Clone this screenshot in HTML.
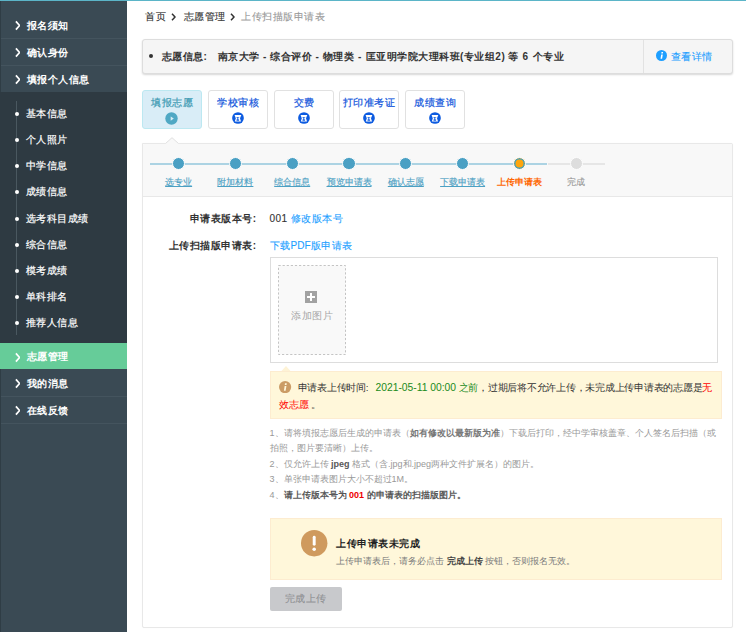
<!DOCTYPE html>
<html lang="zh">
<head>
<meta charset="utf-8">
<title>上传扫描版申请表</title>
<style>
*{box-sizing:border-box;margin:0;padding:0}
html,body{width:746px;height:632px;overflow:hidden;background:#fff}
body{font-family:"Liberation Sans",sans-serif;font-size:10px;letter-spacing:0.5px;color:#333;position:relative}
.l0{letter-spacing:0}
.tab .t{-webkit-text-stroke:0.22px}
.si span{-webkit-text-stroke:0.2px}
#crumb,.val,#info .more,.sl,#btn{-webkit-text-stroke:0.12px}
.sl.o{-webkit-text-stroke:0}
a{text-decoration:none}
.abs{position:absolute}
#topline{left:0;top:0;width:746px;height:1px;background:#5bb5c8;z-index:5}
/* sidebar */
#side{left:0;top:0;width:127px;height:632px;background:#3a4a54}
.nav{left:0;width:127px;height:27px;line-height:27px;color:#fff;font-weight:bold;font-size:10px;box-shadow:inset 0 1px 0 #44545e}
.nav .chev{position:absolute;left:14.5px;top:8.5px;width:5.5px;height:11px}
.nav span{position:absolute;left:26.5px;top:1px;white-space:nowrap}
.nav.first{box-shadow:none}
.nav.act{background:#66cc99;box-shadow:none}
#sub{left:0;top:92px;width:127px;height:251px;background:#2e3a42}
#sub .vline{position:absolute;left:16px;top:9px;width:1px;height:234px;background:#4a5860}
.si{position:absolute;left:0;margin-top:0.8px;width:127px;height:26px;line-height:26px;color:#fff;font-size:10px}
.si i{position:absolute;left:14.5px;top:11px;width:4px;height:4px;border-radius:50%;background:#fff}
.si span{position:absolute;left:25.5px;top:0;white-space:nowrap}
/* breadcrumb */
#crumb{left:145px;top:9px;height:16px;line-height:16px;font-size:10px;color:#333;white-space:nowrap}
#crumb .sep{display:inline-block;width:5px;height:8px;margin:0 7.5px 0 5px;vertical-align:-1px}
#crumb .last{color:#999}
/* info bar */
#info{left:142px;top:39px;width:591px;height:35px;background:#f5f5f5;border:1px solid #ddd;border-radius:3px;box-shadow:0 1px 2px rgba(0,0,0,.16)}
#info .dot{position:absolute;left:6.2px;top:14px;width:4px;height:4px;border-radius:50%;background:#333}
#info .txt{position:absolute;left:0;top:0;line-height:33px;font-weight:bold;color:#333;white-space:nowrap}
#info .txt span{position:absolute;top:0}
#info .vsep{position:absolute;left:500px;top:0;width:1px;height:33px;background:#e2e2e2}
#info .ico{position:absolute;left:512.7px;top:9.8px;width:11px;height:11px}
#info .more{position:absolute;left:527.5px;top:-0.5px;line-height:33px;color:#1e9fff;white-space:nowrap}
/* tabs */
.tab{top:90px;width:60px;height:39px;border:1px solid #e1e1e1;border-radius:3px;background:#fff;text-align:center;color:#1558dc;font-size:10px}
.tab .t{position:absolute;left:-10px;width:78px;top:4px;line-height:16px;white-space:nowrap;text-align:center}
.tab svg.hg{position:absolute;left:22.5px;top:21.2px;width:12px;height:12px}
.tab svg.pl{position:absolute;left:22.1px;top:20.6px;width:13px;height:13px}
.tab.on{background:#d9edf7;border-color:#bce8f1;color:#3f9bb4}
/* panel */
#panel{left:142px;top:143px;width:591px;height:485px;border:1px solid #e8e8e8;border-radius:0 2px 2px 2px;background:#fff;box-shadow:0 0 1px rgba(0,0,0,.05)}
#steps{position:absolute;left:0;top:0;width:589px;height:53px;background:#f8f8f8;border-bottom:1px solid #e8e8e8;border-radius:1px 1px 0 0}
#arrow{left:165px;top:137px;width:14px;height:7px}
.ln{position:absolute;top:19px;height:2px;background:#acd3e3}
.ln.g{background:#e6e6e6}
.c{position:absolute;top:13.3px;width:13.2px;height:13.2px;border-radius:50%;background:#4aa0c4;border:1.6px solid #fdfdfd}
.c.o{background:#ffa60d;box-shadow:inset 0 0 0 1.5px #4aa0b8}
.c.g{background:#ddd}
.sl{position:absolute;top:31.3px;width:80px;text-align:center;font-size:9px;letter-spacing:0;line-height:14px;color:#4ba0c3;white-space:nowrap}
.sl u{text-decoration:underline}
.sl.o{color:#ff6600;font-weight:bold}
.sl.g{color:#999}
/* form */
.lab{font-weight:bold;color:#333;text-align:right;width:120px;left:136.7px;line-height:16px;white-space:nowrap}
.val{left:269.5px;line-height:16px;white-space:nowrap;color:#333}
.val a,.lnk{color:#1e9fff}
#upbox{left:270px;top:257px;width:448px;height:106px;border:1px solid #ddd;background:#fff}
#add{position:absolute;left:7px;top:7px;width:68px;height:90px;text-align:center;color:#a6a6a6;font-size:9.75px}
#add svg.bx{position:absolute;left:0;top:0;width:68px;height:90px}
#add .plus{position:absolute;left:27.3px;top:25.8px;width:12px;height:12px;background:#a2a2a2}
#add .plus:before{content:"";position:absolute;left:2px;top:5.2px;width:8px;height:1.6px;background:#fff}
#add .plus:after{content:"";position:absolute;left:5.2px;top:2px;width:1.6px;height:8px;background:#fff}
#add .tx{position:absolute;left:1px;width:66px;top:44px;line-height:14px}
#alert1{left:270px;top:370.5px;width:451.7px;height:48px;background:#fff7da;border:1px solid #fdecd0}
#alert1 .arr{position:absolute;left:9.7px;top:-6px;width:10px;height:5.5px}
#alert1 .ico{position:absolute;left:8.4px;top:9.2px;width:12.2px;height:12.2px}
#alert1 .p{position:absolute;left:8px;top:7px;width:436px;line-height:17px;font-size:9.75px;letter-spacing:-0.25px;color:#333;text-indent:18.6px;white-space:nowrap}
.dg{font-size:10.3px;letter-spacing:0}
.gr{color:#1a8a1a}.rd{color:#f00}
#notes{left:269.5px;top:425.5px;width:452px;font-size:9px;letter-spacing:0;line-height:15.5px;color:#999}
#notes b{color:#777}
#notes b.d{color:#585858}
#notes b.rd{color:#e00}
#alert2{left:270px;top:518px;width:451.7px;height:62px;background:#fff7da;border:1px solid #fdecd0}
#alert2 .big{position:absolute;left:30.3px;top:11.3px;width:26.4px;height:26.4px}
#alert2 .h{position:absolute;left:65px;top:17px;line-height:16px;font-weight:bold;color:#222;font-size:10px;white-space:nowrap}
#alert2 .s{position:absolute;left:65px;top:34.5px;line-height:14px;color:#7b7b7b;font-size:9px;letter-spacing:0;white-space:nowrap}
#alert2 .s b{color:#444}
#btn{left:270px;top:587px;width:71.5px;height:23.5px;background:#c8c9cc;border-radius:2px;color:#8f9093;text-align:center;line-height:23.5px;font-size:10px}
</style>
</head>
<body>
<div id="topline" class="abs"></div>

<div id="side" class="abs">
  <div class="abs nav first" style="top:11px"><svg class="chev" viewBox="0 0 6 11"><path d="M1 1 L5 5.5 L1 10" fill="none" stroke="#fff" stroke-width="1.9"/></svg><span>报名须知</span></div>
  <div class="abs nav" style="top:38px"><svg class="chev" viewBox="0 0 6 11"><path d="M1 1 L5 5.5 L1 10" fill="none" stroke="#fff" stroke-width="1.9"/></svg><span>确认身份</span></div>
  <div class="abs nav" style="top:65px"><svg class="chev" viewBox="0 0 6 11"><path d="M1 1 L5 5.5 L1 10" fill="none" stroke="#fff" stroke-width="1.9"/></svg><span>填报个人信息</span></div>
  <div id="sub" class="abs">
    <div class="vline"></div>
    <div class="si" style="top:8px"><i></i><span>基本信息</span></div>
    <div class="si" style="top:34.2px"><i></i><span>个人照片</span></div>
    <div class="si" style="top:60.4px"><i></i><span>中学信息</span></div>
    <div class="si" style="top:86.6px"><i></i><span>成绩信息</span></div>
    <div class="si" style="top:112.8px"><i></i><span>选考科目成绩</span></div>
    <div class="si" style="top:139px"><i></i><span>综合信息</span></div>
    <div class="si" style="top:165.2px"><i></i><span>模考成绩</span></div>
    <div class="si" style="top:191.4px"><i></i><span>单科排名</span></div>
    <div class="si" style="top:217.6px"><i></i><span>推荐人信息</span></div>
  </div>
  <div class="abs nav act" style="top:343px;height:26px;line-height:26px"><svg class="chev" viewBox="0 0 6 11"><path d="M1 1 L5 5.5 L1 10" fill="none" stroke="#fff" stroke-width="1.9"/></svg><span>志愿管理</span></div>
  <div class="abs nav" style="top:369px;box-shadow:none"><svg class="chev" viewBox="0 0 6 11"><path d="M1 1 L5 5.5 L1 10" fill="none" stroke="#fff" stroke-width="1.9"/></svg><span>我的消息</span></div>
  <div class="abs nav" style="top:396px"><svg class="chev" viewBox="0 0 6 11"><path d="M1 1 L5 5.5 L1 10" fill="none" stroke="#fff" stroke-width="1.9"/></svg><span>在线反馈</span></div>
  <div class="abs" style="left:0;top:423px;width:127px;height:1px;background:#44545e"></div>
  <div class="abs" style="left:0;top:1px;width:1px;height:91px;background:#2f3d45"></div>
  <div class="abs" style="left:0;top:369px;width:1px;height:263px;background:#2f3d45"></div>
</div>

<div id="crumb" class="abs">首页<svg class="sep" viewBox="0 0 5 8"><path d="M1 0.8 L4 4 L1 7.2" fill="none" stroke="#333" stroke-width="1.5"/></svg>志愿管理<svg class="sep" style="margin:0 6px 0 4.5px" viewBox="0 0 5 8"><path d="M1 0.8 L4 4 L1 7.2" fill="none" stroke="#333" stroke-width="1.5"/></svg><span class="last">上传扫描版申请表</span></div>

<div id="info" class="abs">
  <div class="dot"></div>
  <div class="txt"><span style="left:18.5px">志愿信息:</span><span style="left:74.5px">南京大学</span><span style="left:120px">-</span><span style="left:127px">综合评价</span><span style="left:172.5px">-</span><span style="left:179.5px">物理类</span><span style="left:215px">-</span><span style="left:222.5px">匡亚明学院大理科班(专业组2)</span><span style="left:365px">等</span><span style="left:379.5px">6</span><span style="left:389.5px">个专业</span></div>
  <div class="vsep"></div>
  <svg class="ico" viewBox="0 0 11 11"><circle cx="5.5" cy="5.5" r="5.5" fill="#1e9fff"/><path d="M5.2 4.4 H6.8 L6.1 8.8 H4.5 Z M5.5 2.1 H7.1 L6.9 3.5 H5.3 Z" fill="#fff"/></svg>
  <div class="more">查看详情</div>
</div>

<div class="abs tab on" style="left:142px"><div class="t">填报志愿</div><svg class="pl" viewBox="0 0 13 13"><circle cx="6.5" cy="6.5" r="6.2" fill="#4fa8c4"/><path d="M5.7 4.5 L8.8 6.6 L5.7 8.7 Z" fill="#d6ecf4"/></svg></div>
<div class="abs tab" style="left:208px"><div class="t">学校审核</div><svg class="hg" viewBox="0 0 12 12"><circle cx="6" cy="6" r="5.85" fill="#0d5be0"/><path d="M2.6 3.1 H9.3 L8.0 6.3 L9 9.6 H2.8 L3.8 6.3 Z" fill="#fff"/><path d="M4.3 4.9 H7.3 V5.5 H6.3 V7.4 H7.1 V8.7 H4.5 V7.4 H5.3 V5.5 H4.3 Z" fill="#0d5be0"/></svg></div>
<div class="abs tab" style="left:274px"><div class="t">交费</div><svg class="hg" viewBox="0 0 12 12"><circle cx="6" cy="6" r="5.85" fill="#0d5be0"/><path d="M2.6 3.1 H9.3 L8.0 6.3 L9 9.6 H2.8 L3.8 6.3 Z" fill="#fff"/><path d="M4.3 4.9 H7.3 V5.5 H6.3 V7.4 H7.1 V8.7 H4.5 V7.4 H5.3 V5.5 H4.3 Z" fill="#0d5be0"/></svg></div>
<div class="abs tab" style="left:339px"><div class="t">打印准考证</div><svg class="hg" viewBox="0 0 12 12"><circle cx="6" cy="6" r="5.85" fill="#0d5be0"/><path d="M2.6 3.1 H9.3 L8.0 6.3 L9 9.6 H2.8 L3.8 6.3 Z" fill="#fff"/><path d="M4.3 4.9 H7.3 V5.5 H6.3 V7.4 H7.1 V8.7 H4.5 V7.4 H5.3 V5.5 H4.3 Z" fill="#0d5be0"/></svg></div>
<div class="abs tab" style="left:405px"><div class="t">成绩查询</div><svg class="hg" viewBox="0 0 12 12"><circle cx="6" cy="6" r="5.85" fill="#0d5be0"/><path d="M2.6 3.1 H9.3 L8.0 6.3 L9 9.6 H2.8 L3.8 6.3 Z" fill="#fff"/><path d="M4.3 4.9 H7.3 V5.5 H6.3 V7.4 H7.1 V8.7 H4.5 V7.4 H5.3 V5.5 H4.3 Z" fill="#0d5be0"/></svg></div>

<div id="panel" class="abs">
  <div id="steps">
    <div class="ln" style="left:7.3px;width:397.2px"></div>
    <div class="ln g" style="left:404.5px;width:57px"></div>
    <div class="c" style="left:29.0px"></div>
    <div class="c" style="left:85.8px"></div>
    <div class="c" style="left:142.6px"></div>
    <div class="c" style="left:199.4px"></div>
    <div class="c" style="left:256.2px"></div>
    <div class="c" style="left:313.0px"></div>
    <div class="c o" style="left:369.8px"></div>
    <div class="c g" style="left:426.6px"></div>
    <div class="sl" style="left:-4.4px"><u>选专业</u></div>
    <div class="sl" style="left:52.4px"><u>附加材料</u></div>
    <div class="sl" style="left:109.2px"><u>综合信息</u></div>
    <div class="sl" style="left:166.0px"><u>预览申请表</u></div>
    <div class="sl" style="left:222.8px"><u>确认志愿</u></div>
    <div class="sl" style="left:279.6px"><u>下载申请表</u></div>
    <div class="sl o" style="left:336.4px">上传申请表</div>
    <div class="sl g" style="left:393.2px">完成</div>
  </div>
</div>
<svg id="arrow" class="abs" viewBox="0 0 14 7"><path d="M0 7 L7 0.5 L14 7 Z" fill="#f8f8f8"/><path d="M0.5 6.5 L7 0.7 L13.5 6.5" fill="none" stroke="#e0e0e0" stroke-width="1"/></svg>

<div class="abs lab" style="top:210.7px">申请表版本号:</div>
<div class="abs val" style="top:210.7px">001 <a>修改版本号</a></div>
<div class="abs lab" style="top:237.7px">上传扫描版申请表:</div>
<div class="abs val" style="top:237.7px"><a>下载<span class="l0">PDF</span>版申请表</a></div>

<div id="upbox" class="abs">
  <div id="add"><svg class="bx" viewBox="0 0 68 90"><rect x="0.5" y="0.5" width="67" height="89" fill="#f9f9f9" stroke="#c4c4c4" stroke-width="1" stroke-dasharray="2.2 1.9"/></svg><div class="plus"></div><div class="tx">添加图片</div></div>
</div>

<div id="alert1" class="abs">
  <svg class="arr" viewBox="0 0 10 5" preserveAspectRatio="none"><path d="M0 5 L5 0 L10 5 Z" fill="#fef3d6"/></svg>
  <div class="p">申请表上传时间:<span style="display:inline-block;width:7.2px"></span><span class="gr"><span class="dg">2021-05-11 00:00</span> 之前</span>，过期后将不允许上传，未完成上传申请表的志愿是<span class="rd">无<br>效志愿</span> 。</div>
  <svg class="ico" viewBox="0 0 11 11"><circle cx="5.5" cy="5.5" r="5.5" fill="#cb9c66"/><path d="M5.1 4.4 H6.7 L6.0 8.8 H4.4 Z M5.4 2.1 H7.0 L6.8 3.5 H5.2 Z" fill="#fff7da"/></svg>
</div>

<div id="notes" class="abs">
  <div>1、请将填报志愿后生成的申请表（<b>如有修改以最新版为准</b>）下载后打印，经中学审核盖章、个人签名后扫描（或拍照，图片要清晰）上传。</div>
  <div>2、仅允许上传 <b class="d">jpeg</b> 格式（含.jpg和.jpeg两种文件扩展名）的图片。</div>
  <div>3、单张申请表图片大小不超过1M。</div>
  <div>4、<b class="d">请上传版本号为 </b><b class="rd">001</b><b class="d"> 的申请表的扫描版图片。</b></div>
</div>

<div id="alert2" class="abs">
  <svg class="big" viewBox="0 0 27 27"><circle cx="13.5" cy="13.5" r="13.5" fill="#cf9a5e"/><rect x="12" y="6" width="3" height="10" rx="1.5" fill="#fff"/><circle cx="13.5" cy="19.8" r="1.8" fill="#fff"/></svg>
  <div class="h">上传申请表未完成</div>
  <div class="s">上传申请表后，请务必点击 <b>完成上传</b> 按钮，否则报名无效。</div>
</div>

<div id="btn" class="abs">完成上传</div>
</body>
</html>
